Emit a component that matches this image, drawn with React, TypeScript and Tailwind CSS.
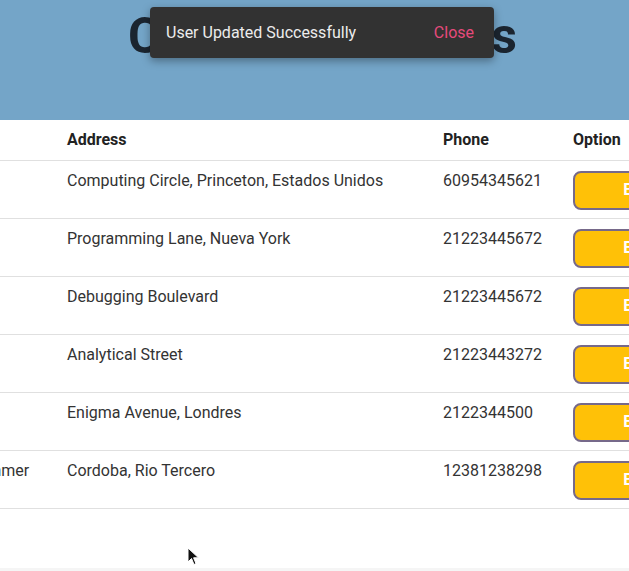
import React from 'react'

type Client = {
  job: string
  address: string
  phone: string
}

const clients: Client[] = [
  { job: 'Doctor', address: 'Computing Circle, Princeton, Estados Unidos', phone: '60954345621' },
  { job: 'Writer', address: 'Programming Lane, Nueva York', phone: '21223445672' },
  { job: 'Nurse', address: 'Debugging Boulevard', phone: '21223445672' },
  { job: 'Pilot', address: 'Analytical Street', phone: '21223443272' },
  { job: 'Baker', address: 'Enigma Avenue, Londres', phone: '2122344500' },
  { job: 'Programmer', address: 'Cordoba, Rio Tercero', phone: '12381238298' },
]

export default function App() {
  return (
    <div className="relative w-[629px] h-[571px] overflow-hidden bg-white" style={{ fontFamily: 'Roboto, "Noto Sans", sans-serif' }}>
      {/* Header */}
      <header className="h-[120px] bg-[#74a5c8] flex justify-center pl-[16px]">
        <h1 className="mt-[10px] text-[50px] leading-[52px] font-bold text-[#1b2530] whitespace-nowrap">
          Client Directories
        </h1>
      </header>

      {/* Table */}
      <div className="overflow-hidden">
        <table className="table-fixed border-collapse ml-[-72px] w-[760px] text-[16px] text-[#333]">
          <colgroup>
            <col className="w-[127px]" />
            <col className="w-[376px]" />
            <col className="w-[130px]" />
            <col className="w-[127px]" />
          </colgroup>
          <thead>
            <tr className="h-[40px] border-b border-[#e0e0e0]">
              <th className="px-3 text-left font-bold text-[#222]">Job</th>
              <th className="px-3 text-left font-bold text-[#222]">Address</th>
              <th className="px-3 text-left font-bold text-[#222]">Phone</th>
              <th className="px-3 text-left font-bold text-[#222]">Option</th>
            </tr>
          </thead>
          <tbody>
            {clients.map((c, i) => (
              <tr key={i} className="h-[58px] border-b border-[#e0e0e0] align-top">
                <td className="px-3 pt-[10px] leading-[20px] whitespace-nowrap">{c.job}</td>
                <td className="px-3 pt-[10px] leading-[20px]">{c.address}</td>
                <td className="px-3 pt-[10px] leading-[20px]">{c.phone}</td>
                <td className="px-3 pt-[10px]">
                  <button className="w-[128px] h-[39px] rounded-[8px] border-2 border-[#76698a] bg-[#ffc107] text-white font-bold text-[16px]">
                    Edit
                  </button>
                </td>
              </tr>
            ))}
          </tbody>
        </table>
      </div>

      {/* Footer strip */}
      <div className="absolute left-0 right-0 bottom-0 h-[3px] bg-[#f5f5f5]" />

      {/* Snackbar */}
      <div className="absolute left-[150px] top-[7px] w-[344px] h-[51px] rounded-[4px] bg-[#323232] shadow-[0_3px_8px_rgba(0,0,0,0.35)] flex items-center justify-between pl-4 pr-5">
        <span className="text-[16px] text-[#ececec]">User Updated Successfully</span>
        <span className="text-[16px] text-[#e64a7c]">Close</span>
      </div>

      {/* Cursor */}
      <svg className="absolute left-[187px] top-[547px]" width="13" height="20" viewBox="0 0 13 20">
        <path d="M1 1 L1 15 L4.5 11.5 L7 17.5 L9 16.6 L6.6 10.8 L11.5 10.8 Z" fill="#111" stroke="#fff" strokeWidth="1" />
      </svg>
    </div>
  )
}
